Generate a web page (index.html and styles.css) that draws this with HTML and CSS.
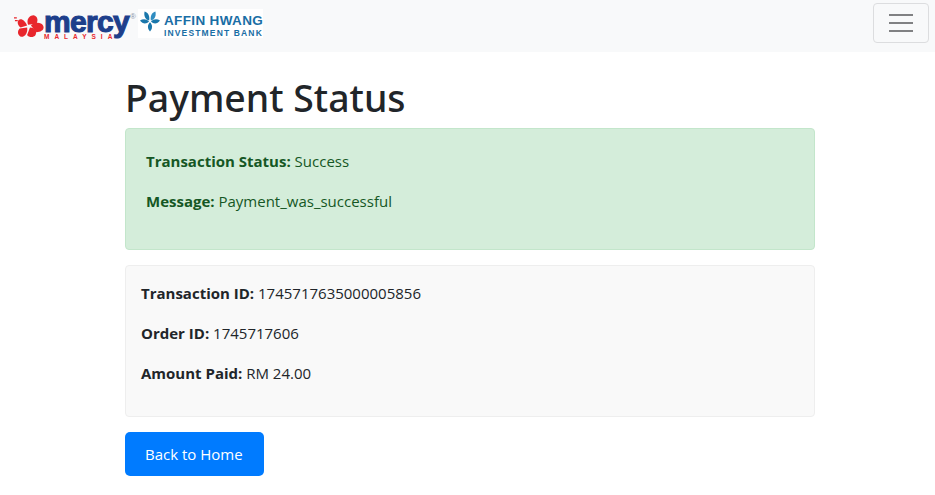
FILE: index.html
```html
<!DOCTYPE html>
<html lang="en">
<head>
<meta charset="utf-8">
<title>Payment Status</title>
<link rel="stylesheet" href="styles.css">
</head>
<body>
<nav class="navbar">
  <div class="brand">
    <svg class="hibiscus" width="30" height="23" viewBox="0 0 32 24" aria-hidden="true">
      <g fill="#e8262c">
        <path d="M15 10C13 5 16 0 21 0c4 1 5 5 3 9z"/>
        <path d="M18 11c4-4 11-4 13 0 2 4-2 7-7 7z"/>
        <path d="M17 13c5 0 8 3 6 8-2 3-7 3-9 0z"/>
        <path d="M14 13c1 5-2 10-6 10-4-1-5-6-2-9z"/>
        <path d="M14 11C12 6 8 3 5 5c-2 2-1 6 2 8z"/>
        <path d="M0 2h3v1.500H0zM1 5h3v1.500H1z"/>
      </g>
    </svg>
    <div class="mercy">
      <span class="mercy-word">mercy<sup class="reg">®</sup></span>
      <span class="mercy-sub">MALAYSIA</span>
    </div>
    <div class="affin">
      <svg class="flower" width="20" height="22" viewBox="0 0 22 23" aria-hidden="true">
        <g fill="#1a77ab">
          <path d="M10 11C6 10 4 6 5 1c4 1 6 5 5 10z"/>
          <path d="M12 11c4-1 6-5 5-10-4 1-6 5-5 10z" fill="#2f8cc0"/>
          <path d="M10 12C7 9 3 9 0 11c3 4 7 4 10 1z"/>
          <path d="M12 12c3-3 7-3 10-1-3 4-7 4-10 1z"/>
          <path d="M11 13c-3 3-3 7 0 10 3-3 3-7 0-10z"/>
        </g>
      </svg>
      <div class="affin-text">
        <span class="affin-top">AFFIN HWANG</span>
        <span class="affin-sub">INVESTMENT BANK</span>
      </div>
    </div>
  </div>
  <button class="toggler" type="button" aria-label="Toggle navigation">
    <span class="bar"></span><span class="bar"></span><span class="bar"></span>
  </button>
</nav>
<main class="container">
  <h1 class="title">Payment Status</h1>
  <section class="alert">
    <p class="line"><strong>Transaction Status:</strong> Success</p>
    <p class="line"><strong>Message:</strong> Payment_was_successful</p>
  </section>
  <section class="details">
    <p class="line"><strong>Transaction ID:</strong> 1745717635000005856</p>
    <p class="line"><strong>Order ID:</strong> 1745717606</p>
    <p class="line"><strong>Amount Paid:</strong> RM 24.00</p>
  </section>
  <a class="btn" href="#">Back to Home</a>
</main>
</body>
</html>
```

FILE: styles.css
```css
* { box-sizing: border-box; }
html, body { margin: 0; padding: 0; }
body {
  font-family: "Open Sans", "Noto Sans", sans-serif;
  font-size: 15px;
  line-height: 24px;
  color: #212529;
  background: #fff;
}
.navbar {
  height: 52px;
  background: #f8f9fa;
  display: flex;
  justify-content: space-between;
  align-items: flex-start;
  padding: 3px 6px 0 14px;
}
.brand {
  display: flex;
  align-items: flex-start;
  height: 40px;
}
.hibiscus { margin-top: 12px; flex: none; }
.mercy { display: flex; flex-direction: column; width: 94px; margin-top: 7px; flex: none; }
.mercy-word {
  font-family: "Liberation Sans", sans-serif;
  font-weight: 700;
  font-size: 30px;
  line-height: 24px;
  letter-spacing: -0.7px;
  color: #1d3f8b;
  -webkit-text-stroke: 1.1px #1d3f8b;
  white-space: nowrap;
}
.reg { font-size: 8px; line-height: 0; color: #8a94a8; font-weight: 400; vertical-align: 13px; -webkit-text-stroke: 0; letter-spacing: 0; margin-left: 1px; }
.mercy-sub {
  font-family: "Liberation Sans", sans-serif;
  font-weight: 700;
  font-size: 6.500px;
  line-height: 6px;
  letter-spacing: 5px;
  color: #e8262c;
  white-space: nowrap;
}
.affin {
  display: flex;
  align-items: flex-start;
  width: 125px;
  height: 29px;
  margin-top: 6px;
  padding: 1px 0 0 2px;
  background: #fff;
  flex: none;
}
.flower { flex: none; }
.affin-text {
  display: flex;
  flex-direction: column;
  margin-left: 4px;
  padding-top: 4px;
  font-family: "Liberation Sans", sans-serif;
  font-weight: 700;
  color: #1a6ea5;
  white-space: nowrap;
}
.affin-top { font-size: 13.500px; line-height: 13px; letter-spacing: 0.350px; }
.affin-sub { font-size: 8.500px; line-height: 10px; letter-spacing: 1.150px; margin-top: 1px; }
.toggler {
  width: 56px;
  height: 40px;
  padding: 0;
  background: transparent;
  border: 1px solid #dcdddf;
  border-radius: 4px;
  display: flex;
  flex-direction: column;
  align-items: center;
  justify-content: center;
  gap: 6px;
}
.bar { display: block; width: 24px; height: 2px; background: #808183; }
.container {
  width: 690px;
  margin-left: 125px;
  padding-top: 22px;
}
.title {
  margin: 0 0 6px;
  font-family: "Noto Sans", "Open Sans", sans-serif;
  font-size: 37.400px;
  line-height: 48px;
  font-weight: 500;
}
.line { margin: 0 0 16px; }
.line strong { font-weight: 700; }
.alert {
  padding: 20px;
  background: #d4edda;
  border: 1px solid #c3e6cb;
  border-radius: 4px;
  color: #155724;
  margin-bottom: 15px;
  height: 122px;
}
.details {
  padding: 15px;
  height: 152px;
  background: #f9f9f9;
  border: 1px solid #eeeeee;
  border-radius: 4px;
  margin-bottom: 15px;
}
.btn {
  display: inline-block;
  padding: 10px 21px 10px 20px;
  background: #007bff;
  color: #fff;
  border-radius: 5px;
  text-decoration: none;
}
```
